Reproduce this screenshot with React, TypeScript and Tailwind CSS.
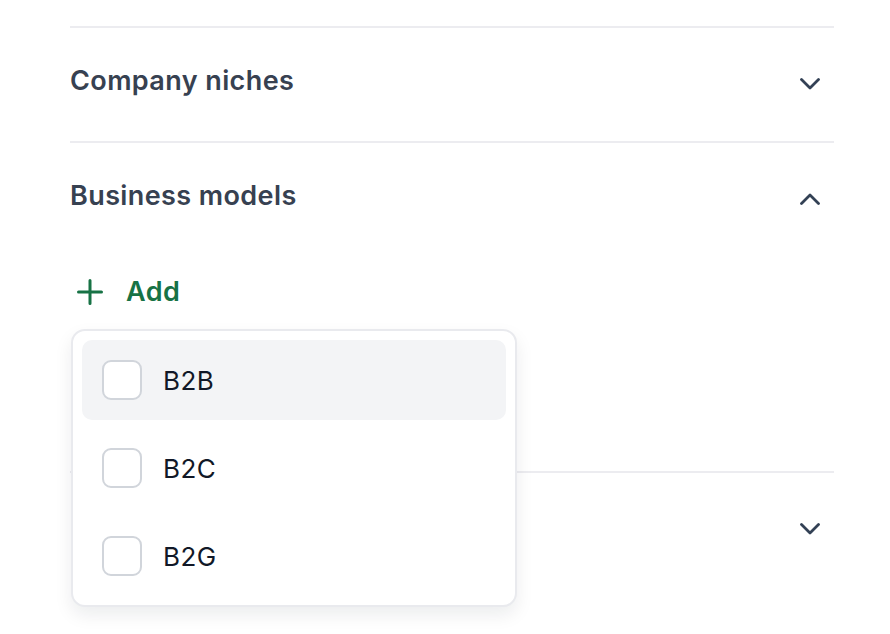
import React from "react";

function Chevron({ up }: { up?: boolean }) {
  return (
    <svg width="20" height="12" viewBox="0 0 20 12" fill="none" className="mt-[6px]">
      <path
        d={up ? "M1.5 10.5 L10 2 L18.5 10.5" : "M1.5 1.5 L10 10 L18.5 1.5"}
        stroke="#334155"
        strokeWidth="2.8"
        strokeLinecap="round"
        strokeLinejoin="round"
      />
    </svg>
  );
}

function Header({ title, up }: { title: string; up?: boolean }) {
  return (
    <div className="flex items-center justify-between pt-[35px] h-[71px]">
      <span className="text-[27px] leading-[36px] font-semibold text-[#374151] tracking-[0.4px]">{title}</span>
      <div className="w-[48px] flex justify-center">
        <Chevron up={up} />
      </div>
    </div>
  );
}

function Item({ label, active }: { label: string; active?: boolean }) {
  return (
    <div className={`flex items-center h-[80px] rounded-[10px] px-[20px] gap-[21px] ${active ? "bg-[#f3f4f6]" : ""}`}>
      <div className="w-[40px] h-[40px] rounded-[9px] border-2 border-[#d1d5db] bg-white" />
      <span className="text-[26px] font-normal text-[#111827] tracking-[0.5px]">{label}</span>
    </div>
  );
}

export default function App() {
  return (
    <div className="w-[890px] h-[634px] bg-white overflow-hidden pt-[26px] pl-[70px]" style={{ fontFamily: "Inter, 'Noto Sans', sans-serif" }}>
      <div className="w-[764px]">
        <div className="border-t-2 border-[#ececf0] h-[115px]">
          <Header title="Company niches" />
        </div>
        <div className="border-t-2 border-[#ececf0] h-[330px] relative">
          <Header title="Business models" up />
          <div className="flex items-center h-[36px] mt-[60px] gap-[23px] pl-[7px]">
            <svg width="26" height="26" viewBox="0 0 26 26" fill="none">
              <path d="M13 1.5 V24.5 M1.5 13 H24.5" stroke="#177245" strokeWidth="3" strokeLinecap="round" />
            </svg>
            <span className="text-[27px] font-semibold text-[#177245] tracking-[0.4px]">Add</span>
          </div>
          <div className="absolute left-[1px] top-[186px] w-[446px] h-[278px] bg-white border-2 border-[#e9eaee] rounded-[14px] shadow-[0_8px_18px_rgba(17,24,39,0.08)] p-[9px] flex flex-col gap-[8px] z-10">
            <Item label="B2B" active />
            <Item label="B2C" />
            <Item label="B2G" />
          </div>
        </div>
        <div className="border-t-2 border-[#ececf0] h-[200px]">
          <Header title="" />
        </div>
      </div>
    </div>
  );
}
